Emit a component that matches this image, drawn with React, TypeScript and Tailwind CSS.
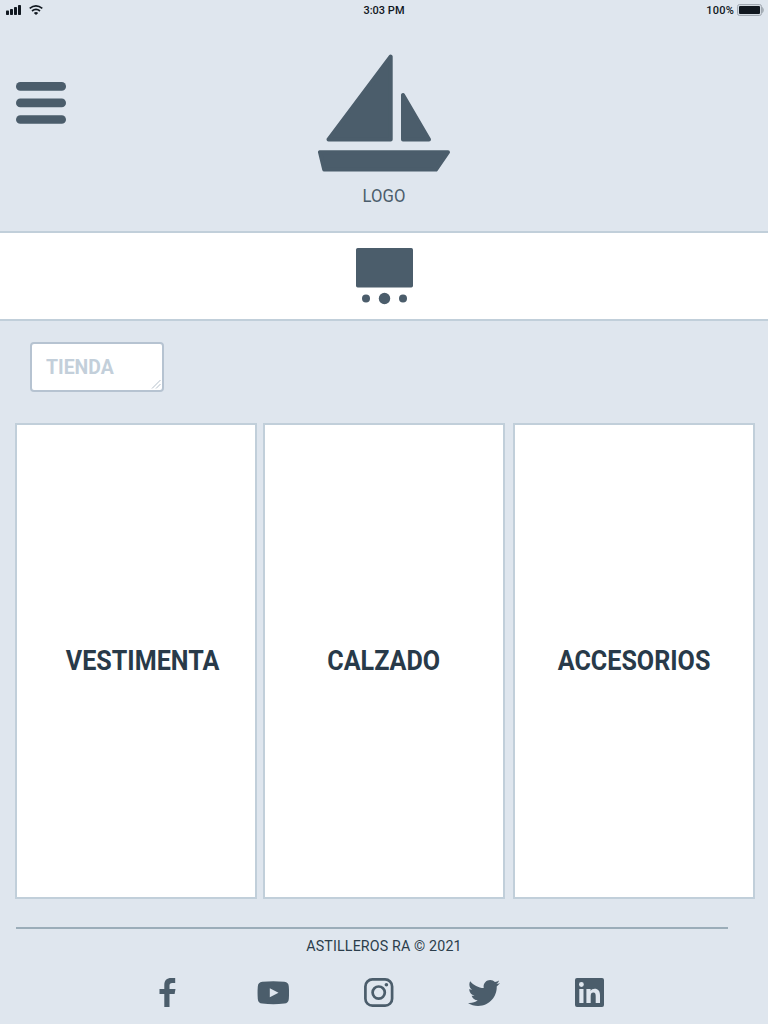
import React from 'react';

const shops = [
  { name: 'VESTIMENTA', place: 'ml-0 pl-[14px]' },
  { name: 'CALZADO', place: 'ml-[6px]' },
  { name: 'ACCESORIOS', place: 'ml-[8px]' },
];

function StatusBar() {
  return (
    <div className="grid h-5 grid-cols-3 items-start pl-[6px] pr-[4px] text-[11px] font-medium leading-5 text-[#10161d]">
      <div className="flex items-center gap-[7px] pt-[5px]">
        <svg width="16" height="10" viewBox="0 0 16 10" fill="#111820">
          <rect x="0" y="5.5" width="3" height="4.5" rx=".7" />
          <rect x="4" y="4" width="3" height="6" rx=".7" />
          <rect x="8" y="2" width="3" height="8" rx=".7" />
          <rect x="12" y="0" width="3" height="10" rx=".7" />
        </svg>
        <svg width="14" height="10" viewBox="0 0 14 10" fill="none" stroke="#111820">
          <path d="M.7 3.4Q6.9-1.6 13.3 3.4" strokeWidth="1.7" />
          <path d="M3 6Q7 2.8 11 6" strokeWidth="1.7" />
          <path d="M4.8 7.9Q7 6.2 9.2 7.9L7 10Z" fill="#111820" stroke="none" />
        </svg>
      </div>
      <div className="pr-[2px] pt-px text-center">3:03 PM</div>
      <div className="flex items-start justify-end gap-[3px]">
        <span className="pt-px tracking-[0.2px]">100%</span>
        <svg className="mt-[4px]" width="27" height="12" viewBox="0 0 27 12">
          <rect x=".5" y=".5" width="24" height="11" rx="2" fill="#d3dae1" stroke="#a1a9b2" />
          <rect x="2" y="2" width="21" height="8" rx="1" fill="#111820" />
          <path d="M25 2.5Q27 4.5 27 6T25 9.5Z" fill="#a8b0b8" />
        </svg>
      </div>
    </div>
  );
}

function Header() {
  return (
    <header className="grid h-[211px] grid-cols-3 pt-[34px]">
      <button aria-label="Menu" className="ml-4 mt-7 h-[42px] w-[50px]">
        <svg width="50" height="42" viewBox="0 0 50 42" fill="#4b5d6b">
          <rect y=".1" width="50" height="8.6" rx="4.3" />
          <rect y="16.6" width="50" height="8.6" rx="4.3" />
          <rect y="33.2" width="50" height="8.6" rx="4.3" />
        </svg>
      </button>
      <div className="flex flex-col items-center">
        <svg className="shrink-0" width="132" height="118" viewBox="318 54 132 118" fill="#4b5d6b" stroke="#4b5d6b" strokeWidth="4" strokeLinejoin="round">
          <path d="M390.7 56.5V139.5H328.5Z" />
          <path d="M403 95V139.5H429Z" />
          <path d="M320 152.2H448L436 169.5H324.2Z" />
        </svg>
        <div className="mt-[10px] scale-x-[0.9] text-[18.5px] leading-7 tracking-[0.1px] text-[#4b5d6b]">LOGO</div>
      </div>
    </header>
  );
}

function Carousel() {
  return (
    <section className="flex h-[90px] justify-center border-y-2 border-[#c1cfda] bg-white pt-[15px]">
      <svg width="58" height="57" viewBox="0 0 58 57" fill="#4b5d6b">
        <rect x="1" y="0" width="57" height="39.5" rx="1.7" />
        <circle cx="11" cy="50.5" r="4" />
        <circle cx="29.5" cy="50.5" r="5.7" />
        <circle cx="48" cy="50.5" r="4" />
      </svg>
    </section>
  );
}

function Social() {
  return (
    <div className="mt-[21px] flex h-8 pl-[159px] text-[#4b5d6b]">
      <svg className="mr-[81px]" width="17" height="30" viewBox="-.5 0 17 30" fill="currentColor">
        <path d="M4.8 29V16H0v-5h4.8V7.2C4.8 2.5 7.2.1 11.8.1H15.7v4.8h-3C10.8 4.9 10 5.8 10 7.5V11h6l-.9 5H10v13Z" />
      </svg>
      <svg className="mr-[75px] mt-[3px]" width="32" height="24" viewBox="-.3 -.2 32 24" fill="currentColor" fillRule="evenodd">
        <path d="M5 .6Q16-.6 27 .6C30 .9 31.3 2.5 31.5 5.3Q32 11.5 31.5 17.7C31.3 20.7 29.8 22.1 27 22.4Q16 23.6 5 22.4C2.2 22.1.7 20.7.5 17.7Q0 11.5.5 5.3C.7 2.5 2.1.9 5 .6M12.5 7v9l8.7-4.5Z" />
      </svg>
      <svg className="mr-[74px]" width="30" height="30" viewBox="0 0 30 30" fill="none" stroke="currentColor" strokeWidth="2.7">
        <rect x="1.4" y="1.4" width="26.7" height="26.3" rx="7" />
        <circle cx="14.7" cy="14.6" r="6.1" />
        <circle cx="22.4" cy="6.8" r="1.8" fill="currentColor" stroke="none" />
      </svg>
      <svg className="mr-[75px] mt-[2px]" width="32" height="26" viewBox="0 0 512 417" preserveAspectRatio="none" fill="currentColor">
        <path transform="translate(0 -48)" d="M459.37 151.716c.325 4.548.325 9.097.325 13.645 0 138.72-105.583 298.558-298.558 298.558-59.452 0-114.68-17.219-161.137-47.106 8.447.974 16.568 1.299 25.34 1.299 49.055 0 94.213-16.568 130.274-44.832-46.132-.975-84.792-31.188-98.112-72.772 6.498.974 12.995 1.624 19.818 1.624 9.421 0 18.843-1.3 27.614-3.573-48.081-9.747-84.143-51.98-84.143-102.985v-1.299c13.969 7.797 30.214 12.67 47.431 13.319-28.264-18.843-46.781-51.005-46.781-87.391 0-19.492 5.197-37.36 14.294-52.954 51.655 63.675 129.3 105.258 216.365 109.807-1.624-7.797-2.599-15.918-2.599-24.04 0-57.828 46.782-104.934 104.934-104.934 30.213 0 57.502 12.67 76.67 33.137 23.715-4.548 46.456-13.32 66.599-25.34-7.798 24.366-24.366 44.833-46.132 57.827 21.117-2.273 41.584-8.122 60.426-16.243-14.292 20.791-32.161 39.308-52.628 54.253z" />
      </svg>
      <svg width="30" height="30" viewBox="0 0 30 30" fill="currentColor" fillRule="evenodd">
        <path d="M2 0H27Q29 0 29 2V27Q29 29 27 29H2Q0 29 0 27V2Q0 0 2 0M4.3 11V25H8.5V11ZM6.4 4A2.45 2.45 0 1 0 6.4 8.9 2.45 2.45 0 0 0 6.4 4M11.4 11V25H15.7V18C15.7 15.6 16.5 14.5 18.4 14.5S20.7 15.9 20.7 18.2V25H25V17.2C25 13 23.1 10.7 19.7 10.7 17.8 10.7 16.3 11.5 15.6 12.9V11Z" />
      </svg>
    </div>
  );
}

export default function App() {
  return (
    <div className="h-[1024px] w-[768px] overflow-hidden bg-[#dfe6ee] font-['Roboto','Liberation_Sans',sans-serif]">
      <StatusBar />
      <Header />
      <Carousel />
      <main className="pt-[21px]">
        <div className="relative ml-[30px] flex h-[50px] w-[134px] items-center rounded-[4px] border-2 border-[#b6c3d1] bg-white pl-[14px] text-[20px] font-bold text-[#c3cfda]">
          <span className="origin-left scale-x-[0.97]">TIENDA</span>
          <svg className="absolute bottom-[1px] right-0" width="11" height="10" viewBox="0 0 11 10" stroke="#b3bfca" strokeWidth="1">
            <path d="M1 9.5L9.5 1M5 9.5L9.5 5" />
          </svg>
        </div>
        <div className="ml-[15px] mt-[31px] flex">
          {shops.map((s) => (
            <a key={s.name} className={`flex h-[476px] w-[242px] items-center justify-center border-2 border-[#c1cfda] bg-white pt-px text-[27px] font-bold text-[#283a49] ${s.place}`}>
              <span className="scale-x-[0.93]">{s.name}</span>
            </a>
          ))}
        </div>
      </main>
      <footer className="mt-[28px]">
        <div className="ml-4 h-[2px] w-[712px] bg-[#9badb9]" />
        <div className="mt-[6px] h-[22px] scale-x-[0.95] text-center text-[15px] leading-[22px] tracking-[0.15px] text-[#2b3d4b]">ASTILLEROS RA © 2021</div>
        <Social />
      </footer>
    </div>
  );
}
